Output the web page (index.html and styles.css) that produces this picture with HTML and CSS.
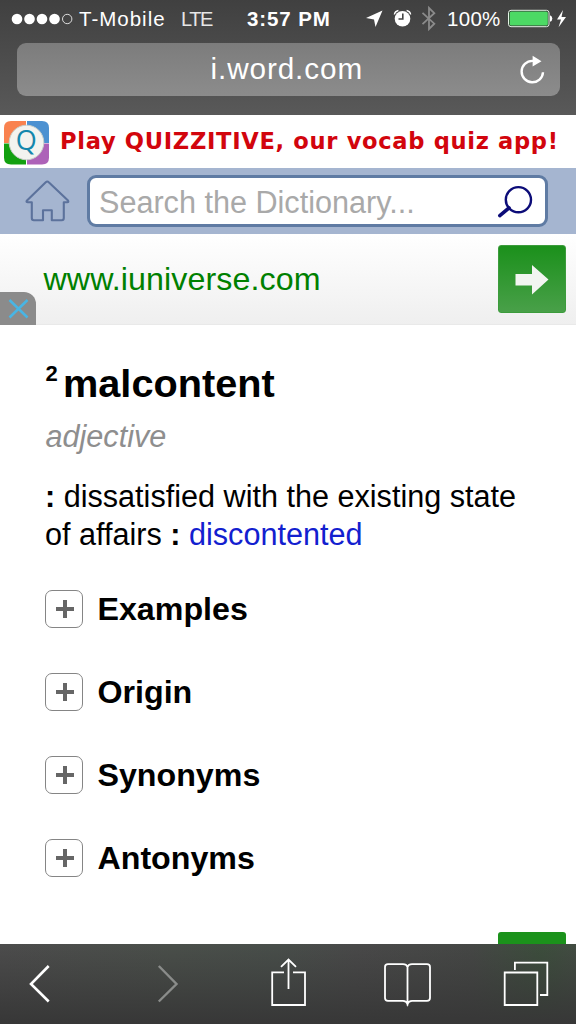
FILE: index.html
```html
<!DOCTYPE html>
<html lang="en">
<head>
<meta charset="utf-8">
<title>malcontent</title>
<link rel="stylesheet" href="styles.css">
</head>
<body>
<div class="screen">
  <header class="browser">
    <div class="status">
      <svg class="signal" width="62" height="14" viewBox="0 0 62 14" fill="#fff">
        <circle cx="6" cy="7" r="5.3"/><circle cx="18.5" cy="7" r="5.3"/><circle cx="31" cy="7" r="5.3"/><circle cx="43.5" cy="7" r="5.3"/>
        <circle cx="56.2" cy="7" r="4.7" fill="none" stroke="#ddd" stroke-width="1"/>
      </svg>
      <span class="carrier">T-Mobile</span>
      <span class="network">LTE</span>
      <span class="time">3:57 PM</span>
      <svg class="indicators" width="76" height="38" viewBox="364 0 76 38">
        <path d="M366 18 L382.5 10.5 L375.5 27 L374 19.5 Z" fill="#fff"/>
        <circle cx="402.5" cy="18.7" r="7.8" fill="#fff"/>
        <path d="M402.8 13.5 V19 H398.5" fill="none" stroke="#444" stroke-width="1.6"/>
        <path d="M394.4 14.5 Q394.8 11.3 398.4 10.5 M406.6 10.5 Q410.2 11.3 410.6 14.5" fill="none" stroke="#fff" stroke-width="1.4"/>
        <path d="M422.5 12.8 L434.3 23.7 L429 29 V8 L434.3 13.2 L422.5 24.2" fill="none" stroke="#8b8b8b" stroke-width="1.8"/>
      </svg>
      <span class="percent">100%</span>
      <svg class="battery" width="60" height="38" viewBox="507 0 60 38">
        <rect x="508.5" y="10.3" width="40.5" height="16.4" rx="2.5" fill="#333" stroke="#e4f5e6" stroke-width="1"/>
        <rect x="509.7" y="11.4" width="38.1" height="14.2" rx="1.5" fill="#4cd964"/>
        <path d="M550 15.2 Q552.3 16 552.3 18.5 T550 21.8 Z" fill="#fff"/>
        <path d="M563 10 L557 19.4 H561 L558.6 27.2 L566 17 H561.5 Z" fill="#fff"/>
      </svg>
    </div>
    <div class="address">
      <span class="url">i.word.com</span>
      <svg class="reload" width="28" height="32" viewBox="518 53 28 32">
        <path d="M543 71.2 A10.7 10.7 0 1 1 532.4 59.9 H534" fill="none" stroke="#fff" stroke-width="2.4"/>
        <path d="M532.6 54.8 L541.5 60.3 L532.6 65.5 Z" fill="#fff"/>
      </svg>
    </div>
  </header>

  <a class="promo">
    <svg class="quiz-logo" width="46" height="45" viewBox="0 0 46 45">
      <path d="M7 0 H22 V22 H0 V7 Q0 0 7 0Z" fill="#f9824f"/>
      <path d="M23 0 H38 Q45 0 45 7 V22 H23Z" fill="#4c91d1"/>
      <path d="M0 22.5 H22 V43.5 H7 Q0 43.5 0 36.5Z" fill="#12a010"/>
      <path d="M23 22.5 H45 V36.5 Q45 43.5 38 43.5 H23Z" fill="#ad62b8"/>
      <circle cx="22.5" cy="21.5" r="17.3" fill="#f3f3ef" stroke="#c9cfca" stroke-width="1"/>
      <text class="quiz-q" x="22.3" y="28.5" text-anchor="middle">Q</text>
    </svg>
    <span class="promo-text">Play QUIZZITIVE, our vocab quiz app!</span>
  </a>

  <div class="search">
    <svg class="home" width="46" height="44" viewBox="24 178 46 44">
      <path d="M47.2 180.5 Q48 180.5 49 181.5 L68 199.5 Q69 201 67.2 201.3 H63.8 V217 Q63.8 219.2 61.8 219.2 H51.8 V209.2 H43 V219.2 H33.8 Q31.8 219.2 31.8 217 V201.3 H28 Q25.6 201 27 199.5 L45.5 181.5 Q46.5 180.5 47.2 180.5Z" fill="none" stroke="#5c729c" stroke-width="2.1" stroke-linejoin="round"/>
    </svg>
    <div class="field">
      <span class="placeholder">Search the Dictionary...</span>
      <svg class="glass" width="36" height="36" viewBox="497 183 36 36" fill="none" stroke="#0c0c78">
        <circle cx="518.4" cy="199.7" r="12.6" stroke-width="2.4"/>
        <path d="M509 208 L499.8 215.6" stroke-width="3.6" stroke-linecap="round"/>
      </svg>
    </div>
  </div>

  <div class="ad">
    <span class="ad-url">www.iuniverse.com</span>
    <span class="go">
      <svg width="68" height="68" viewBox="0 0 68 68"><path d="M17.5 29 H34 V20 L50.5 34.5 L34 49.5 V40.5 H17.5Z" fill="#f2f5f1"/></svg>
    </span>
    <span class="close">
      <svg width="36" height="33" viewBox="0 0 36 33"><path d="M9.5 8 L27.5 25.5 M27.5 8 L9.5 25.5" stroke="#48b5e4" stroke-width="2.5"/></svg>
    </span>
  </div>

  <main class="entry">
    <h1 class="word"><span class="homograph">2</span>malcontent</h1>
    <p class="pos">adjective</p>
    <p class="sense"><b>:</b> dissatisfied with the existing state<br>of affairs <b>:</b> <a class="link">discontented</a></p>
    <ul class="sections">
      <li class="section"><span class="toggle"></span>Examples</li>
      <li class="section"><span class="toggle"></span>Origin</li>
      <li class="section"><span class="toggle"></span>Synonyms</li>
      <li class="section"><span class="toggle"></span>Antonyms</li>
    </ul>
  </main>

  <div class="next-ad"><span class="next-go"></span></div>

  <nav class="toolbar">
    <svg class="tool back" width="30" height="79" viewBox="25 945 30 79" fill="none"><path d="M48.7 966 L31 984 L48.7 1001.5" stroke="#fff" stroke-width="2.6"/></svg>
    <svg class="tool forward" width="30" height="79" viewBox="153 945 30 79" fill="none"><path d="M158.8 966 L176.5 984 L158.8 1001.5" stroke="#8a8c8a" stroke-width="2.4"/></svg>
    <svg class="tool share" width="40" height="79" viewBox="268 945 40 79" fill="none" stroke="#fff" stroke-width="1.8"><path d="M284 972.4 H272.2 V1005 H305 V972.4 H293 M288.5 989 V960 M281 966.8 L288.5 959.5 L296 966.8"/></svg>
    <svg class="tool book" width="50" height="79" viewBox="382 945 50 79" fill="none" stroke="#fff" stroke-width="1.8"><path d="M407.5 1005.5 V967 Q406.5 964.2 403 964.2 H388 Q385 964.2 385 967 V998 Q385 1000.8 388 1000.8 H403 Q406.5 1000.8 407.5 1004 Q408.5 1000.8 412 1000.8 H427 Q430 1000.8 430 998 V967 Q430 964.2 427 964.2 H412 Q408.5 964.2 407.5 967"/></svg>
    <svg class="tool tabs" width="50" height="79" viewBox="501 945 50 79" fill="none" stroke="#fff" stroke-width="1.8"><path d="M504.7 972.5 H537.3 V1005 H504.7Z M514.9 970 V962.7 H547.3 V995 H540"/></svg>
  </nav>
</div>
</body>
</html>
```

FILE: styles.css
```css
* { box-sizing: border-box; }
body { margin: 0; background: #fff; font-family: "Liberation Sans", Arial, sans-serif; color: #000; }
.screen { width: 576px; height: 1024px; display: flex; flex-direction: column; overflow: hidden; white-space: nowrap; }
svg { display: block; flex: none; }

.browser { height: 115px; flex: none; background: linear-gradient(#404040, #595959); }
.status { height: 38px; display: flex; align-items: center; padding-left: 11px; color: #fff; font-size: 20.5px; line-height: 38px; }
.carrier { width: 102px; padding-left: 6px; letter-spacing: 1px; }
.signal { margin-top: -1px; }
.network { width: 66px; padding-left: 6px; font-size: 20px; letter-spacing: -1.4px; color: #e6e6e6; }
.time { width: 123px; padding-left: 6px; font-weight: bold; letter-spacing: 0.9px; }
.percent { width: 60px; margin-left: 7px; letter-spacing: 0.3px; }
.address { height: 53px; margin: 5px 16px 0 17px; border-radius: 9px; background: linear-gradient(#7c7c7c, #8c8c8c); display: flex; align-items: center; color: #fff; }
.url { flex: 1; padding-left: 193.5px; font-size: 29.7px; line-height: 51px; padding-bottom: 2px; letter-spacing: 0.9px; }
.reload { margin-right: 14px; }

.promo { height: 53px; flex: none; display: flex; align-items: center; padding-left: 4px; background: #fff; }
.quiz-logo { margin-top: 3px; }
.quiz-q { font: 27px "Open Sans", sans-serif; fill: #1487ac; }
.promo-text { margin-left: 10px; font: bold 22.6px/53px "DejaVu Sans", sans-serif; letter-spacing: 0.68px; color: #d2050d; }

.search { height: 66px; flex: none; display: flex; align-items: center; padding-left: 24px; background: #a5b5d0; }
.field { width: 461px; height: 52px; margin-left: 17px; border: 3px solid #5f7ba3; border-radius: 9px; background: #fff; display: flex; align-items: center; justify-content: space-between; padding: 0 12px 0 9px; }
.placeholder { padding-top: 1px; font-size: 30.6px; line-height: 42px; color: #a9a9a9; }

.ad { position: relative; height: 91px; flex: none; display: flex; align-items: center; justify-content: space-between; padding: 0 10px 0 43.5px; background: linear-gradient(#fff, #efefef); border-bottom: 1px solid #e9e9e9; }
.ad-url { font-size: 32.2px; letter-spacing: 0.1px; color: #008000; }
.go { width: 68px; height: 68px; border-radius: 3px; border: 1px solid #3c9c3c; background: linear-gradient(#1b901b, #49a049); }
.go svg { margin: -1px; }
.close { position: absolute; left: 0; bottom: -1px; width: 36px; height: 33px; border-radius: 0 12px 0 0; background: #8b8b8b; }

.entry { padding: 35px 45px 0; flex: 1; }
.word { display: flex; margin: 0; font-size: 39.7px; line-height: 46px; }
.homograph { width: 18px; padding-left: 0.5px; font-size: 22px; line-height: 28px; }
.pos { margin: 11px 0 0; padding-left: 0.5px; font-size: 30.6px; line-height: 38px; font-style: italic; color: #8e8e8e; }
.sense { margin: 22px 0 0; font-size: 30.6px; line-height: 38px; }
.link { color: #1220cf; }
.sections { list-style: none; margin: 37px 0 0; padding: 0; display: grid; gap: 45px; }
.section { height: 38px; display: flex; align-items: center; gap: 14.5px; font-size: 32.2px; line-height: 38px; font-weight: bold; }
.toggle { width: 38px; height: 38px; border: 1px solid #858585; border-radius: 7px; background: linear-gradient(#666, #666) 10px 16px / 18px 4px no-repeat, linear-gradient(#666, #666) 17px 9px / 4px 18px no-repeat, #fff; }

.next-ad { height: 12px; flex: none; display: flex; justify-content: flex-end; padding-right: 10px; }
.next-go { width: 68px; height: 12px; border-radius: 3px 3px 0 0; background: #1b921b; }

.toolbar { height: 80px; flex: none; display: flex; padding: 1px 0 0 25px; background: linear-gradient(rgba(50, 50, 50, 0), #373737), linear-gradient(90deg, #4c4c4c, #4a4f4a 30%, #484e4a 48%, #494949 62%, #454745 82%, #3c4e3c 94%, #424c42); }
.forward { margin-left: 98px; }
.share { margin-left: 85px; }
.book { margin-left: 74px; }
.tabs { margin-left: 69px; }
```
